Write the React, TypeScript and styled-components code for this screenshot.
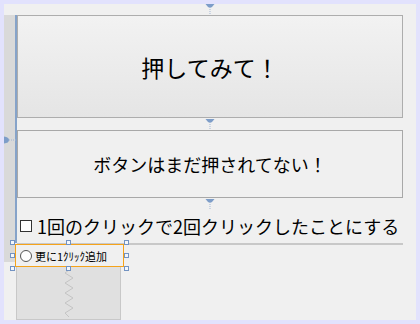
import React from 'react';
import styled, { createGlobalStyle } from 'styled-components';

const GlobalStyle = createGlobalStyle`
  html, body {
    margin: 0;
    padding: 0;
    background: #e2e2fd;
  }
  body {
    font-family: 'Noto Sans CJK JP', 'Noto Sans', sans-serif;
    color: #000;
  }
`;

const Surface = styled.div`
  position: relative;
  margin: 4px 0 0 4px;
  width: 412px;
  height: 316px;
  box-sizing: border-box;
  padding-top: 11px;
  background: #f0f0f0;
  display: flex;
  align-items: flex-start;
`;

const Strip = styled.div`
  width: 11px;
  height: 247px;
  background: #d9d9d9;
  flex-shrink: 0;
`;

const Main = styled.div`
  width: 388px;
  display: flex;
  flex-direction: column;
`;

const Upper = styled.div`
  border-left: 2px solid #86a3c9;
  display: flex;
  flex-direction: column;
`;

const BigButton = styled.button`
  width: 386px;
  height: 103px;
  margin: 0 0 12px;
  padding: 0;
  box-sizing: border-box;
  border: 1px solid #adadad;
  background: linear-gradient(#f2f2f2, #e5e5e5);
  font-family: inherit;
  font-size: 23px;
  color: #000;
  display: flex;
  align-items: center;
  justify-content: center;
`;

const StatusLabel = styled.div`
  width: 386px;
  height: 68px;
  box-sizing: border-box;
  border: 1px solid #a8a8a8;
  background: #f0f0f0;
  font-size: 18px;
  display: flex;
  align-items: center;
  justify-content: center;
`;

const CheckRow = styled.label`
  height: 45px;
  box-sizing: border-box;
  padding: 10px 0 0 3px;
  display: flex;
  align-items: center;
  gap: 5px;
  font-size: 18px;
  white-space: nowrap;
`;

const CheckBox = styled.span`
  width: 12px;
  height: 12px;
  box-sizing: border-box;
  border: 1px solid #333;
  background: #fff;
  flex-shrink: 0;
`;

const Separator = styled.div`
  margin-left: 2px;
  width: 386px;
  height: 2px;
  background: #c8c8c8;
`;

const Selected = styled.div`
  position: relative;
  margin-top: -1px;
  width: 109px;
  height: 23px;
  box-sizing: border-box;
  border: 1px solid #f5a31a;
  padding-left: 4px;
  display: flex;
  align-items: center;
  gap: 3px;
  font-size: 11px;
  white-space: nowrap;
`;

const Radio = styled.span`
  width: 12px;
  height: 12px;
  box-sizing: border-box;
  border: 1px solid #555;
  border-radius: 50%;
  background: #fff;
  flex-shrink: 0;
`;

const Handle = styled.span<{ $x: 'l' | 'c' | 'r'; $y: 't' | 'm' | 'b' }>`
  position: absolute;
  width: 5px;
  height: 5px;
  box-sizing: border-box;
  border: 1px solid #7393c2;
  background: #f4f7fb;
  left: ${(p) => (p.$x === 'l' ? '-6px' : p.$x === 'c' ? '50px' : 'auto')};
  right: ${(p) => (p.$x === 'r' ? '-6px' : 'auto')};
  top: ${(p) => (p.$y === 't' ? '-5px' : p.$y === 'm' ? '8px' : 'auto')};
  bottom: ${(p) => (p.$y === 'b' ? '-5px' : 'auto')};
`;

const EmptyPanel = styled.div`
  margin-left: 1px;
  width: 105px;
  height: 53px;
  box-sizing: border-box;
  border: 1px solid #c8c8c8;
  border-top: none;
  background: #e0e0e0;
  display: flex;
  justify-content: center;
  padding-top: 3px;
`;

const Marker = styled.div<{ $left: number; $top: number }>`
  position: absolute;
  left: ${(p) => p.$left}px;
  top: ${(p) => p.$top}px;
  line-height: 0;
`;

const DownMarker = () => (
  <svg width="10" height="10" viewBox="0 0 10 10">
    <path d="M0.5 0 H9.5 L7 3 Q5 4.5 3 3 Z" fill="#7d9dc8" />
    <path d="M5 5 V10" stroke="#9fb5d4" strokeWidth="1" strokeDasharray="1 1" />
  </svg>
);

const SideMarker = () => (
  <svg width="12" height="8" viewBox="0 0 12 8">
    <path d="M0 0.5 Q5 1 5 4 Q5 7 0 7.5 Z" fill="#7d9dc8" />
    <path d="M5 4 H12" stroke="#9fb5d4" strokeWidth="1" strokeDasharray="1 1" />
  </svg>
);

const ZigZag = () => (
  <svg width="10" height="48" viewBox="0 0 10 48">
    <polyline
      points="5,0 1,3 9,8 1,13 9,18 1,23 9,28 1,33 9,38 1,43 5,47"
      fill="none"
      stroke="#c4c4c4"
      strokeWidth="1"
    />
  </svg>
);

export default function App() {
  return (
    <>
      <GlobalStyle />
      <Surface>
        <Strip />
        <Main>
          <Upper>
            <BigButton type="button">押してみて！</BigButton>
            <StatusLabel>ボタンはまだ押されてない！</StatusLabel>
            <CheckRow>
              <CheckBox />
              1回のクリックで2回クリックしたことにする
            </CheckRow>
          </Upper>
          <Separator />
          <Selected>
            <Radio />
            更に1ｸﾘｯｸ追加
            <Handle $x="l" $y="t" />
            <Handle $x="c" $y="t" />
            <Handle $x="r" $y="t" />
            <Handle $x="l" $y="m" />
            <Handle $x="r" $y="m" />
            <Handle $x="l" $y="b" />
            <Handle $x="c" $y="b" />
            <Handle $x="r" $y="b" />
          </Selected>
          <EmptyPanel>
            <ZigZag />
          </EmptyPanel>
        </Main>
        <Marker $left={201} $top={0}>
          <DownMarker />
        </Marker>
        <Marker $left={201} $top={115}>
          <DownMarker />
        </Marker>
        <Marker $left={201} $top={195}>
          <DownMarker />
        </Marker>
        <Marker $left={0} $top={132}>
          <SideMarker />
        </Marker>
      </Surface>
    </>
  );
}
